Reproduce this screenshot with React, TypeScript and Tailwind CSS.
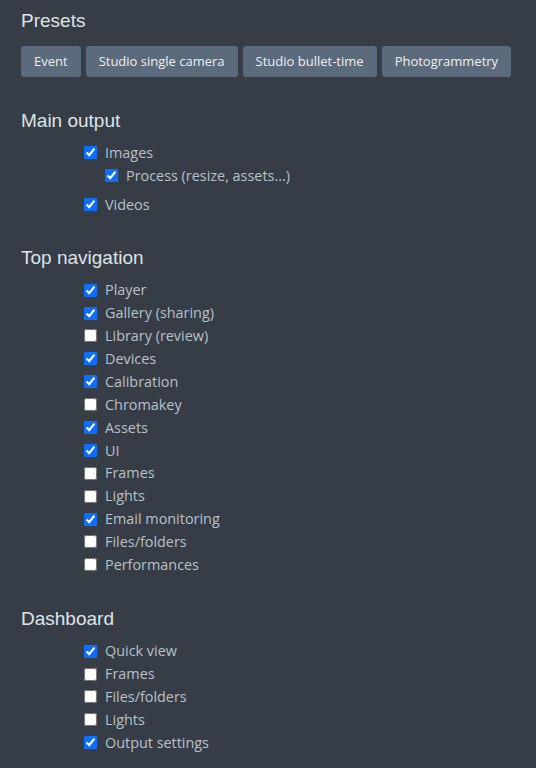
import React from "react";

type Item = { label: string; checked: boolean; children?: Item[] };

const presets = ["Event", "Studio single camera", "Studio bullet-time", "Photogrammetry"];

const sections: { title: string; gap: string; items: Item[] }[] = [
  {
    title: "Main output",
    gap: "mt-[32px]",
    items: [
      { label: "Images", checked: true, children: [{ label: "Process (resize, assets...)", checked: true }] },
      { label: "Videos", checked: true },
    ],
  },
  {
    title: "Top navigation",
    gap: "mt-[30px]",
    items: [
      { label: "Player", checked: true },
      { label: "Gallery (sharing)", checked: true },
      { label: "Library (review)", checked: false },
      { label: "Devices", checked: true },
      { label: "Calibration", checked: true },
      { label: "Chromakey", checked: false },
      { label: "Assets", checked: true },
      { label: "UI", checked: true },
      { label: "Frames", checked: false },
      { label: "Lights", checked: false },
      { label: "Email monitoring", checked: true },
      { label: "Files/folders", checked: false },
      { label: "Performances", checked: false },
    ],
  },
  {
    title: "Dashboard",
    gap: "mt-[31px]",
    items: [
      { label: "Quick view", checked: true },
      { label: "Frames", checked: false },
      { label: "Files/folders", checked: false },
      { label: "Lights", checked: false },
      { label: "Output settings", checked: true },
    ],
  },
];

const Check = ({ item }: { item: Item }) => (
  <div>
    <label className="flex items-center h-[22.9px] gap-[8px]">
      <input type="checkbox" defaultChecked={item.checked} className="m-0 w-[13px] h-[13px] accent-[#0b6efd]" />
      <span>{item.label}</span>
    </label>
    {item.children && (
      <div className="pl-[21px] mb-[6px]">
        {item.children.map((c) => (
          <Check key={c.label} item={c} />
        ))}
      </div>
    )}
  </div>
);

export default function App() {
  return (
    <div className="min-h-[768px] bg-[#363d47] px-[21px] pt-[9px] pb-[20px] font-['Open_Sans',sans-serif]">
      <h2 className="text-[19px] leading-[24px] text-[#dfe3e7] font-['Liberation_Sans',Arial,sans-serif]">Presets</h2>
      <div className="flex gap-[5px] mt-[13px]">
        {presets.map((p) => (
          <button
            key={p}
            className="h-[31px] px-[13px] rounded-[3px] bg-[#5b6b7c] text-[#eef0f2] text-[13px] whitespace-nowrap"
          >
            {p}
          </button>
        ))}
      </div>
      {sections.map((s) => (
        <div key={s.title} className={s.gap}>
          <h2 className="text-[19px] leading-[24px] text-[#dfe3e7] font-['Liberation_Sans',Arial,sans-serif]">
            {s.title}
          </h2>
          <div className="mt-[8.5px] pl-[63px] text-[14.4px] text-[#b9c0c7]">
            {s.items.map((it) => (
              <Check key={it.label} item={it} />
            ))}
          </div>
        </div>
      ))}
    </div>
  );
}
